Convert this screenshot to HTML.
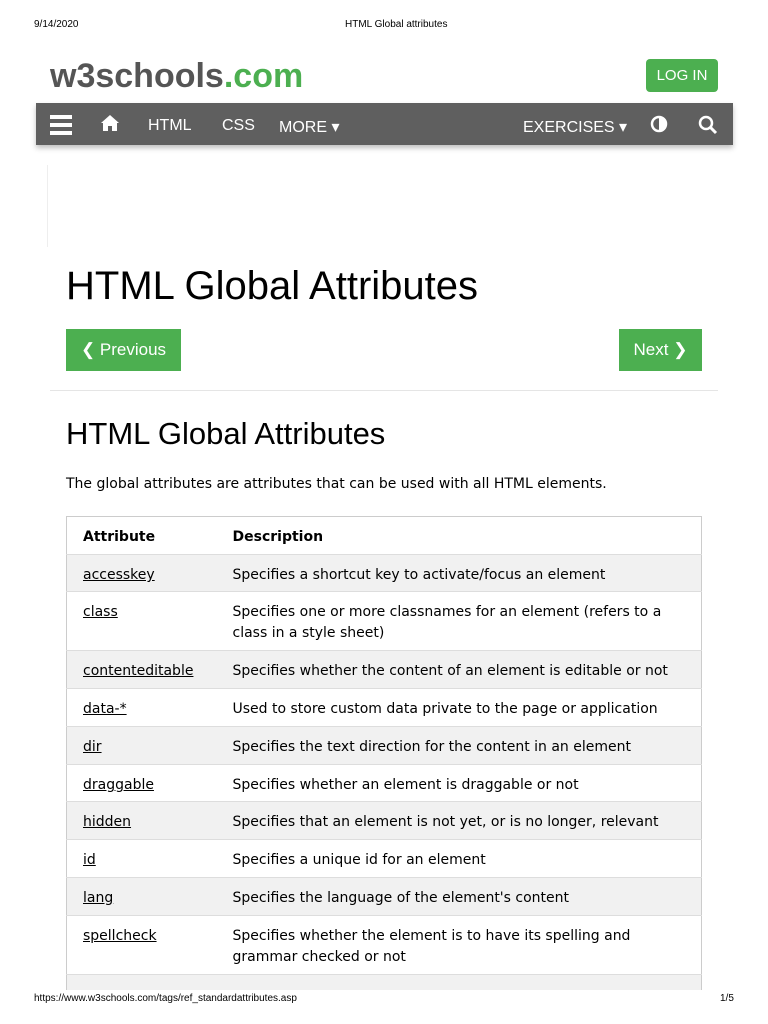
<!DOCTYPE html><html><head><style>
body{margin:0;width:768px;height:1024px;background:#fff;position:relative;overflow:hidden;font-family:"DejaVu Sans","Liberation Sans",sans-serif;color:#000}
.a{position:absolute}
.hdr{font-family:"Liberation Sans",sans-serif;font-size:10px;top:19px}
.nav{left:36px;top:103px;width:697px;height:42px;background:#5f5f5f;box-shadow:0 3px 5px rgba(0,0,0,.25)}
.nav span{position:absolute;top:14px;color:#fff;font-size:16px;font-family:"Liberation Sans",sans-serif}
.btn{background:#4caf50;color:#fff;font-size:17px;font-family:"Liberation Sans",sans-serif;text-align:center;line-height:42px}
table{position:absolute;left:66px;top:516px;width:636px;border-collapse:collapse;border:1px solid #ccc;font-size:14px}
td{border-bottom:1px solid #ddd;padding:10px 12px 0 16px;height:37px;vertical-align:top;box-sizing:border-box;line-height:21px}
td:first-child{width:150px}
tr:nth-child(even){background:#f1f1f1}
</style></head><body>
<div class="a hdr" style="left:34px">9/14/2020</div>
<div class="a hdr" style="left:345px">HTML Global attributes</div>
<div class="a" style="left:50px;top:57px;font-size:34px;font-family:'Liberation Sans',sans-serif;color:#555;font-weight:bold">w3schools<span style="color:#4caf50">.com</span></div>
<div class="a btn" style="left:646px;top:59px;width:72px;height:33px;line-height:33px;border-radius:4px;font-size:15px">LOG IN</div>
<div class="a nav">
<svg class="a" style="left:14px;top:12px" width="22" height="20"><rect y="0" width="22" height="4" fill="#fff"/><rect y="8" width="22" height="4" fill="#fff"/><rect y="16" width="22" height="4" fill="#fff"/></svg>
<svg class="a" style="left:64px;top:11px" width="20" height="18"><path d="M10 1 L1 9 L3 9 L3 17 L8 17 L8 12 L12 12 L12 17 L17 17 L17 9 L19 9 Z" fill="#fff"/></svg>
<span style="left:112px">HTML</span><span style="left:186px">CSS</span><span style="left:243px">MORE ▾</span>
<span style="left:487px">EXERCISES ▾</span>
<svg class="a" style="left:614px;top:12px" width="18" height="18"><circle cx="9" cy="9" r="7" fill="none" stroke="#fff" stroke-width="2.5"/><path d="M9 2 A7 7 0 0 1 9 16 Z" fill="#fff"/></svg>
<svg class="a" style="left:662px;top:12px" width="20" height="20"><circle cx="8" cy="8" r="6" fill="none" stroke="#fff" stroke-width="2.5"/><path d="M12 12 L18 18" stroke="#fff" stroke-width="3"/></svg>
</div>
<div class="a" style="left:47px;top:165px;width:1px;height:82px;background:#eee"></div>
<div class="a" style="left:66px;top:264px;font-size:40px;font-family:'Liberation Sans',sans-serif">HTML Global Attributes</div>
<div class="a btn" style="left:66px;top:329px;width:115px;height:42px">❮ Previous</div>
<div class="a btn" style="left:619px;top:329px;width:83px;height:42px">Next ❯</div>
<div class="a" style="left:50px;top:390px;width:668px;height:1px;background:#e5e5e5"></div>
<div class="a" style="left:66px;top:416px;font-size:31px;font-family:'Liberation Sans',sans-serif">HTML Global Attributes</div>
<div class="a" style="left:66px;top:476px;font-size:14px">The global attributes are attributes that can be used with all HTML elements.</div>
<table>
<tr style="background:#fff"><td style="height:38px"><b>Attribute</b></td><td><b>Description</b></td></tr>
<tr><td><u>accesskey</u></td><td>Specifies a shortcut key to activate/focus an element</td></tr>
<tr><td style="height:59px"><u>class</u></td><td>Specifies one or more classnames for an element (refers to a class in a style sheet)</td></tr>
<tr><td style="height:38px"><u>contenteditable</u></td><td>Specifies whether the content of an element is editable or not</td></tr>
<tr><td style="height:38px"><u>data-*</u></td><td>Used to store custom data private to the page or application</td></tr>
<tr><td style="height:38px"><u>dir</u></td><td>Specifies the text direction for the content in an element</td></tr>
<tr><td style="height:37px"><u>draggable</u></td><td>Specifies whether an element is draggable or not</td></tr>
<tr><td style="height:38px"><u>hidden</u></td><td>Specifies that an element is not yet, or is no longer, relevant</td></tr>
<tr><td style="height:38px"><u>id</u></td><td>Specifies a unique id for an element</td></tr>
<tr><td style="height:38px"><u>lang</u></td><td>Specifies the language of the element's content</td></tr>
<tr><td style="height:59px"><u>spellcheck</u></td><td>Specifies whether the element is to have its spelling and grammar checked or not</td></tr>
<tr><td style="height:30px"></td><td></td></tr>
</table>
<div class="a" style="left:0;top:990px;width:768px;height:34px;background:#fff"></div>
<div class="a hdr" style="left:34px;top:993px">https://www.w3schools.com/tags/ref_standardattributes.asp</div>
<div class="a hdr" style="left:720px;top:993px">1/5</div>
</body></html>
